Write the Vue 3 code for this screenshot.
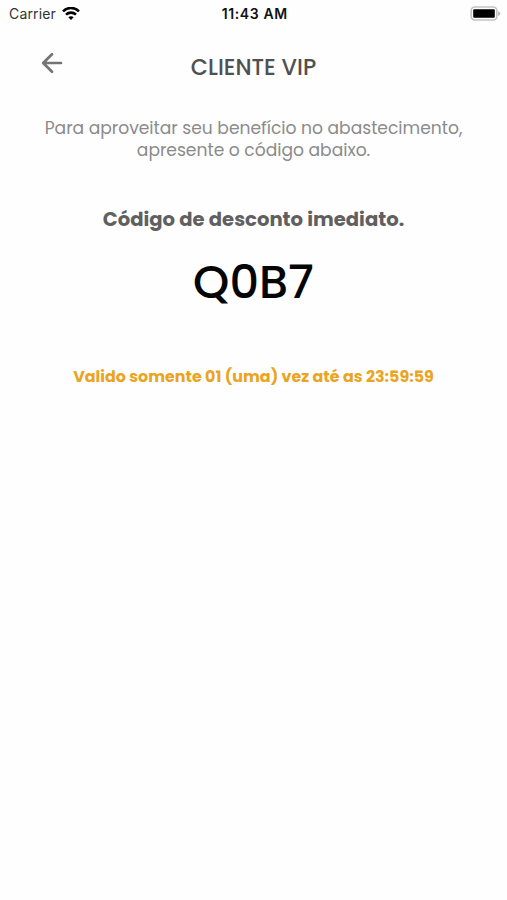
<template>
  <div class="screen">
    <div class="status-bar">
      <div class="carrier">
        <span>{{ carrier }}</span>
        <svg class="wifi" width="18" height="14" viewBox="0 0 18 14" fill="none" stroke="#000" stroke-width="2.6">
          <path d="M1 4.3C5.4-.1 12.6-.1 17 4.3" />
          <path d="M4 7.6c2.8-2.7 7.2-2.7 10 0" />
          <path d="M6.3 10.3c1.5-1.3 3.9-1.3 5.4 0L9 13z" fill="#000" stroke="none" />
        </svg>
      </div>
      <span class="time">{{ time }}</span>
      <svg class="battery" width="31" height="15" viewBox="0 0 31 15">
        <rect x="1.2" y="1" width="25.6" height="13" rx="3.5" fill="#fff" stroke="#c4c4c4" stroke-width="1.7" />
        <rect x="3.2" y="3.2" width="21.6" height="8.6" rx="1" fill="#000" />
        <path d="M28.2 5.3c2.7 1 2.7 3.6 0 4.6z" fill="#b3b3b3" />
      </svg>
    </div>

    <header class="header">
      <button class="back" aria-label="Voltar">
        <svg width="22" height="22" viewBox="0 0 22 22" fill="none" stroke="#747474" stroke-width="2.7" stroke-linecap="round" stroke-linejoin="round">
          <path d="M20 11H2.5M11 2.2L2.2 11l8.8 8.8" />
        </svg>
      </button>
      <h1>CLIENTE VIP</h1>
    </header>

    <main class="content">
      <p class="info">
        Para aproveitar seu benefício no abastecimento,<br />
        apresente o código abaixo.
      </p>
      <h2>Código de desconto imediato.</h2>
      <div class="code">{{ code }}</div>
      <p class="validity">Valido somente 01 (uma) vez até as {{ limit }}</p>
    </main>
  </div>
</template>

<script setup>
import { ref } from 'vue'

const carrier = 'Carrier'
const time = '11:43 AM'
const code = ref('Q0B7')
const limit = ref('23:59:59')
</script>

<style>
body { margin: 0; background: #fefefe; }
</style>

<style scoped>
.screen { min-height: 900px; background: #fefefe; font-family: Poppins, Inter, "Liberation Sans", sans-serif; color: #585858; white-space: nowrap; overflow: hidden }
h1, h2, p { margin: 0 }
.status-bar { display: grid; grid-template-columns: 1fr auto 1fr; align-items: center; height: 27px; padding: 0 6.5px 0 9px; color: #111; font-family: Inter, sans-serif; font-size: 14px; line-height: 27px }
.carrier { display: flex; align-items: center; gap: 6px; letter-spacing: 0.15px; color: #333 }
.time { font-size: 14px; font-weight: 600; letter-spacing: 0.6px }
.battery { justify-self: end; margin-bottom: 1px }
.header { display: grid; grid-template-columns: 60px 1fr 60px; height: 78px }
.back { display: flex; justify-content: flex-end; align-items: flex-start; width: 63px; height: 48px; padding: 25px 0 0; border: 0; background: transparent }
h1 { padding-top: 26px; text-align: center; font-size: 22.3px; line-height: 30px; font-weight: 500; color: #505050 }
.content { display: flex; flex-direction: column; align-items: center; padding-top: 12px; text-align: center }
.info { font-size: 17.12px; line-height: 22px; font-weight: 400; color: #8b8b8b }
h2 { margin-top: 43px; font-size: 19.6px; line-height: 30px; font-weight: 700; color: #606060 }
.code { margin-top: 14px; font-size: 46.2px; line-height: 68px; font-weight: 500; color: #050505 }
.validity { margin-top: 49px; font-size: 15.88px; line-height: 24px; font-weight: 700; color: #eaa41f }
</style>
